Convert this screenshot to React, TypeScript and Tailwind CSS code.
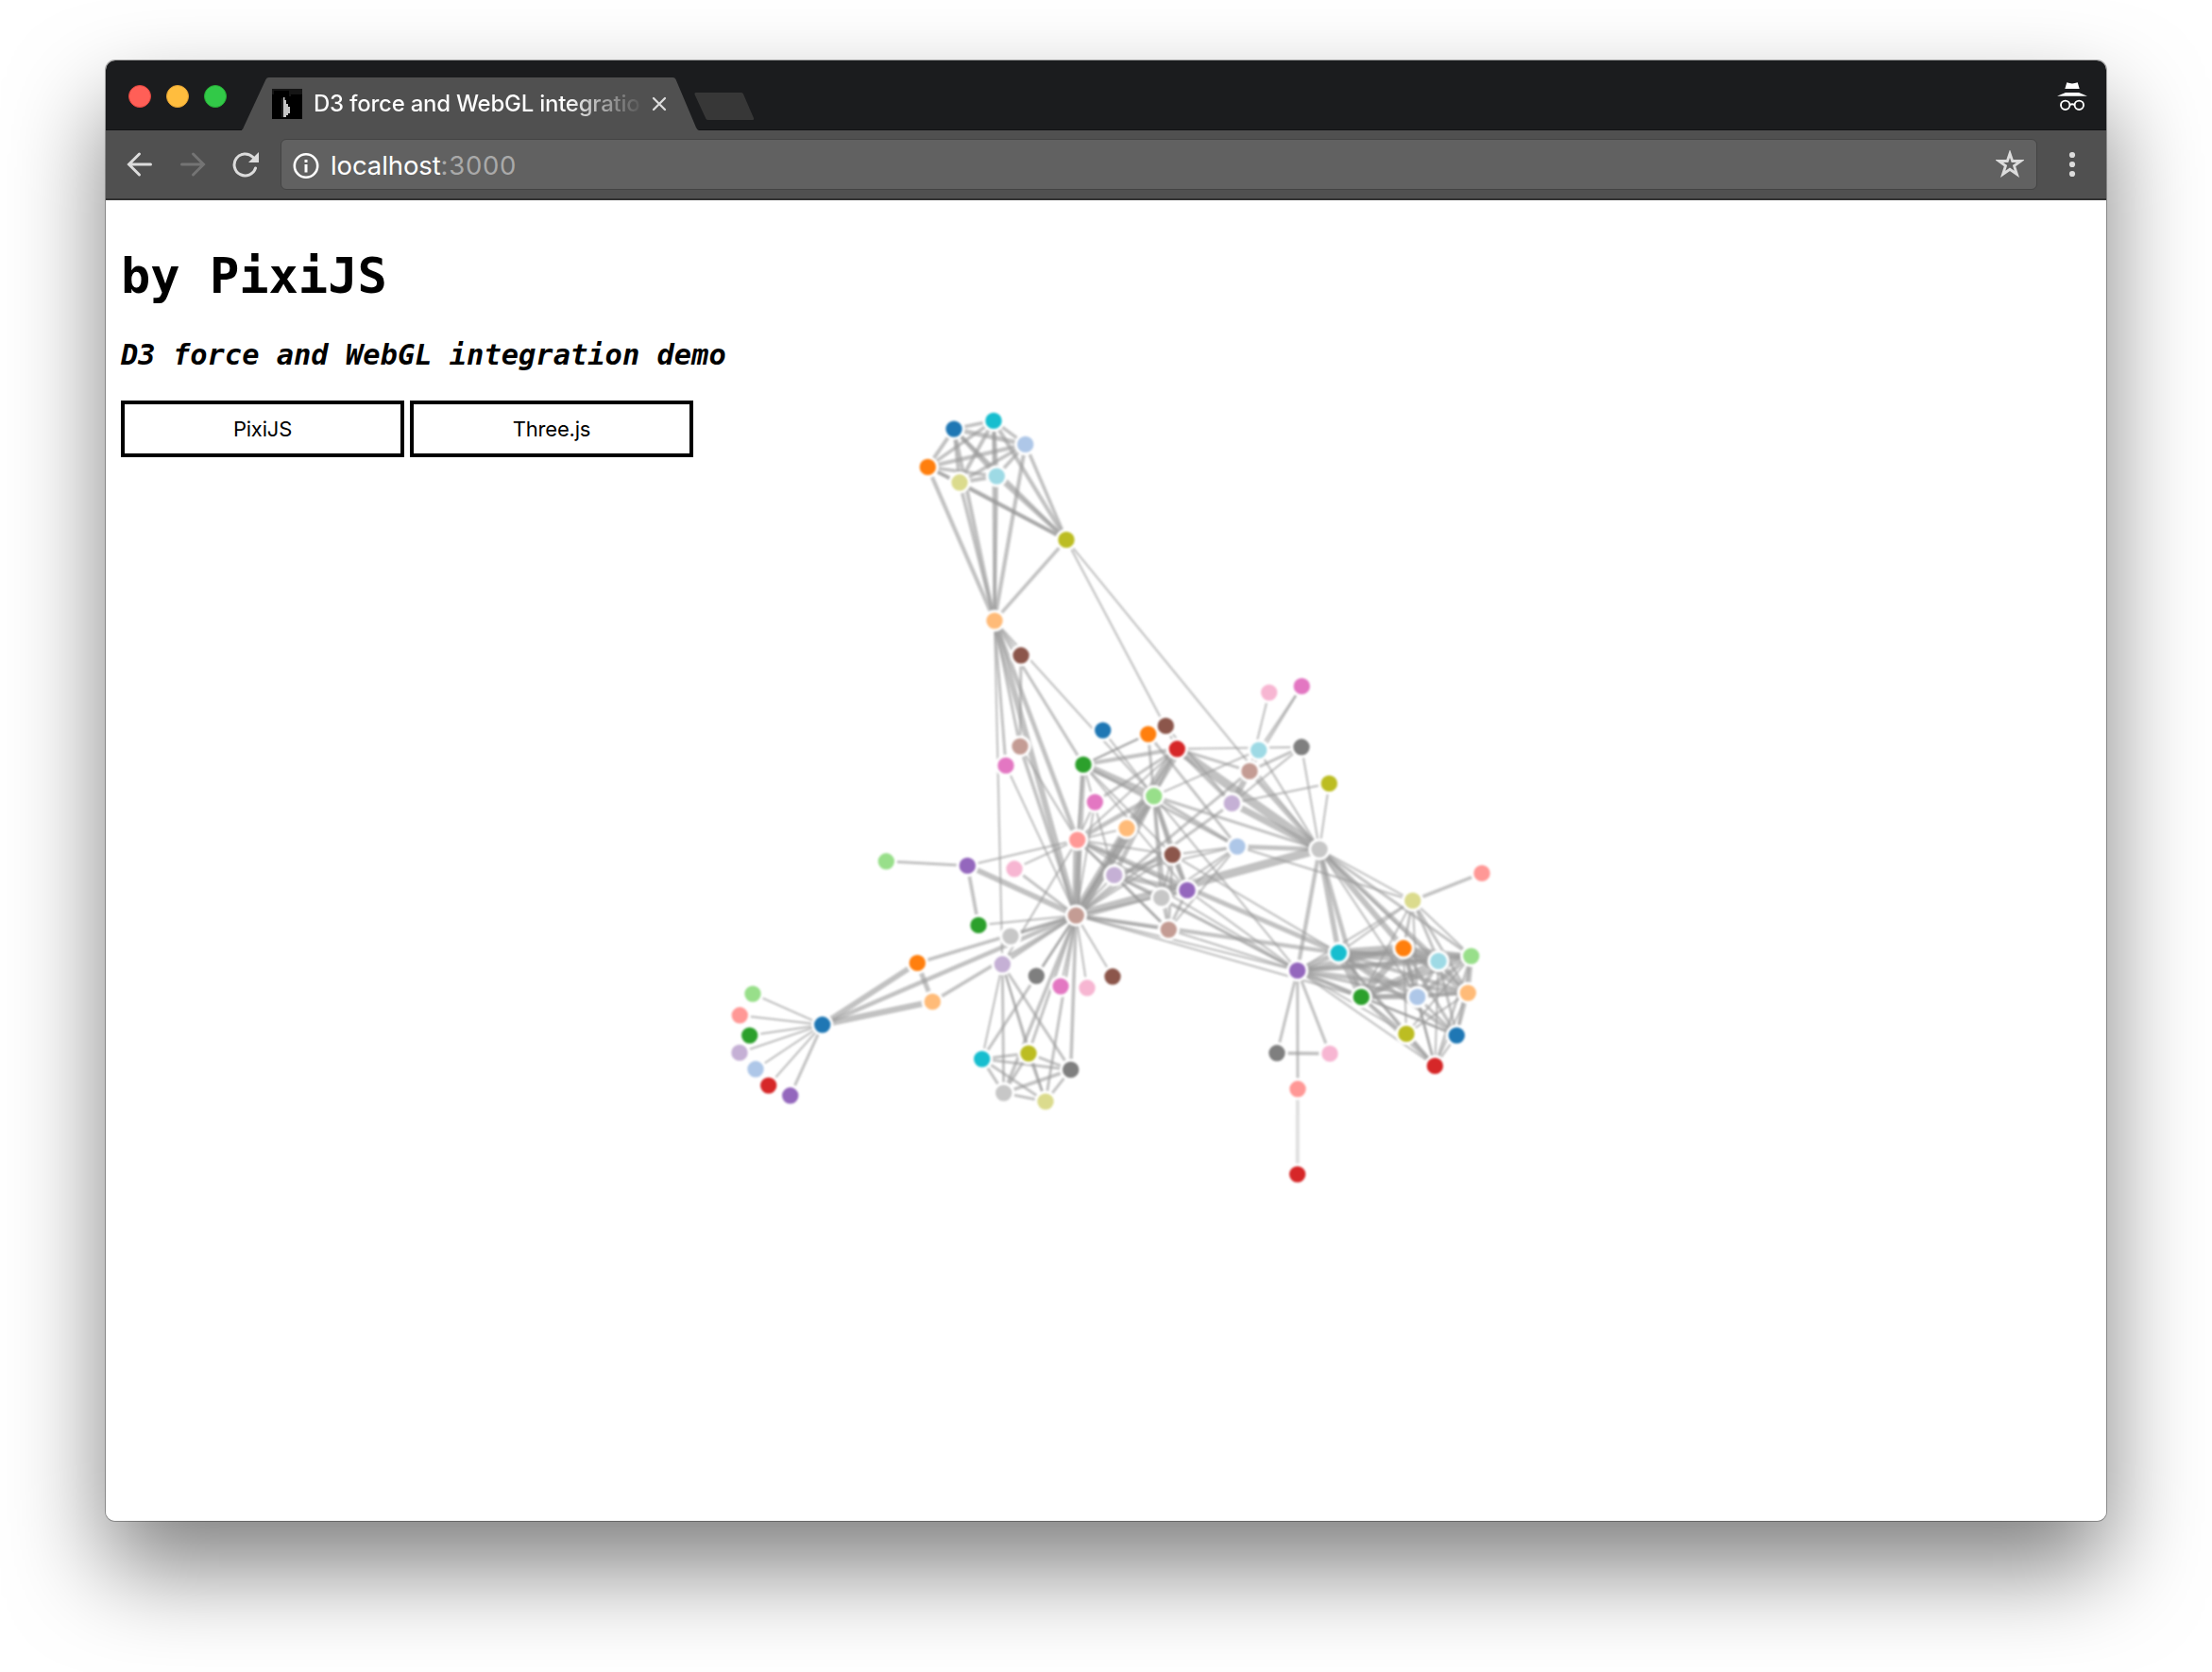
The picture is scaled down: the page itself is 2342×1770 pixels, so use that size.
const C = ['#1f77b4','#aec7e8','#ff7f0e','#ffbb78','#2ca02c','#98df8a','#d62728','#ff9896','#9467bd','#c5b0d5','#8c564b','#c49c94','#e377c2','#f7b6d2','#7f7f7f','#c7c7c7','#bcbd22','#dbdb8d','#17becf','#9edae5'];

// Node centres in window-content pixels, indexed by character id.
const NODES: [number, number][] = [
  [870.7,1084.7],[800,1131.7],[971.3,1019.3],[987.3,1060.3],[793.7,1096],[797,1052],[813.7,1149],[783.3,1074.7],[836.7,1159.7],[783,1114.3],
  [1178,1033.7],[1139.3,969],[1065,810.3],[1151,1045.7],[1097.3,1033],[1070,991],[1129,571.3],[1016,510.7],[1052,445.3],[1055.3,504],
  [1010,454],[1085.7,470.3],[982.3,494.3],[1053,657],[1147,809.3],[1221.7,842.7],[1246.3,792.7],[1140.7,889],[1024.3,916.3],[1061.3,1020.7],
  [1081,693.7],[1080,790],[1123,1044],[1074,919.7],[1133.7,1132.3],[1062.7,1157],[1089,1115],[1107,1166],[1039.7,1121],[1332.7,794],
  [1167.7,773],[1310,896],[1215.7,777],[1193,876.7],[1036,979.3],[938.3,911.7],[1373.7,1243],[1374,1152.7],[1373.7,1027.3],[1304.3,850.3],
  [1234.3,768.3],[1323,816.3],[1378.3,726.3],[1343.7,733],[1378,790.7],[1397,899],[1407.3,829.3],[1495.7,953.3],[1417.3,1008.7],[1523,1017.3],
  [1542.3,1096],[1500.7,1055.3],[1486,1003.7],[1554.3,1051],[1441.3,1055.3],[1557.7,1012],[1519.3,1128.3],[1569,924.3],[1257,942.3],[1179.7,926.3],
  [1241.3,904.7],[1237.3,984],[1159.3,849],[1408,1115.3],[1352,1114.7],[1229.7,950.3],[1489,1094.3],
];

// "source: target-value ..." for every co-occurrence.
const LINKS = `1:0-1|2:0-8|3:0-10 2-6|4:0-1|5:0-1|6:0-1|7:0-1|8:0-2|9:0-1|11:10-1 3-3 2-3 0-5|12:11-1|13:11-1|14:11-1|15:11-1
17:16-4|18:16-4 17-4|19:16-4 17-4 18-4|20:16-3 17-3 18-3 19-4|21:16-3 17-3 18-3 19-3 20-5|22:16-3 17-3 18-3 19-3 20-4 21-4
23:16-3 17-3 18-3 19-3 20-4 21-4 22-4 12-2 11-9|24:23-2 11-7|25:24-13 23-1 11-12|26:24-4 11-31 16-1 25-1|27:11-17 23-5 25-5 24-1 26-1
28:11-8 27-1|29:23-1 27-1 11-2|30:23-1|31:30-2 11-3 23-2 27-1|32:11-1|33:11-2 27-1|34:11-3 29-2|35:11-3 34-3 29-2
36:34-2 35-2 11-2 29-1|37:34-2 35-2 36-2 11-2 29-1|38:34-2 35-2 36-2 37-2 11-2 29-1|39:25-1|40:25-1|41:24-2 25-3|42:41-2 25-2 24-1
43:11-3 26-1 27-1|44:28-3 11-1|45:28-2|47:46-1|48:47-2 27-1 25-1 11-1|49:26-3 11-2|50:49-1 24-1|51:49-9 26-2 11-2|52:51-1 39-1
53:51-1|54:51-2 49-1 26-1|55:51-6 49-12 39-1 54-1 26-21 16-1 25-2 41-5 48-4 11-19|56:49-1 55-1|57:55-1 41-1 48-1
58:55-7 48-7 27-6 57-1 11-4|59:58-15 55-5 48-6 57-2|60:48-1 58-4 59-2|61:48-2 58-6 60-2 59-5 57-1 55-1
62:55-9 58-17 59-13 57-2 48-7 61-6 60-3|63:59-5 48-5 62-6 57-2 58-4 61-3 60-2 55-1|64:55-5 62-12 48-5 63-4 58-10 61-6 60-2 59-9 57-1 11-1
65:63-5 64-7 58-5 62-5 61-5 60-2 59-5 57-1 55-2 48-3|66:64-3 58-3 59-1 62-2 65-2 48-1 63-1 61-1 60-1|67:57-3
68:25-5 11-1 24-1 27-1 48-1 41-1|69:25-6 68-6 11-1 24-1 27-2 48-1 41-1|70:25-4 69-4 68-4 11-1 24-1 27-1 41-1 58-1
71:27-1 69-2 68-2 70-2 11-1 48-1 41-1 25-1|72:26-2 27-1 11-1|73:48-2|74:48-2 73-3|75:69-3 68-3 25-3 48-1 41-1 70-1 71-1
76:64-1 65-1 66-1 63-1 62-1 48-1 58-1`
  .split(/[|\n]/)
  .flatMap((row) => {
    const [s, rest] = row.trim().split(':');
    return rest.split(' ').map((p) => {
      const [t, v] = p.split('-');
      return { s: +s, t: +t, v: +v };
    });
  });

function Graph() {
  return (
    <svg className="absolute left-0 top-0 h-[1398px] w-[2118px] blur-[0.8px]" viewBox="112 211.9 2118 1398">
      <g stroke="#999" strokeOpacity={0.6}>
        {LINKS.map(({ s, t, v }) => {
          const faint = s === 47 && t === 46;
          return (
            <line
              key={`${s}-${t}`}
              x1={NODES[s][0]}
              y1={NODES[s][1]}
              x2={NODES[t][0]}
              y2={NODES[t][1]}
              strokeWidth={faint ? 4 : 2 * Math.sqrt(v) + 0.2}
              strokeOpacity={faint ? 0.3 : 0.6}
            />
          );
        })}
      </g>
      {NODES.map(([x, y], i) => (
        <circle key={i} cx={x} cy={y} r={10.2} fill={C[i % 20]} stroke="#fff" strokeWidth={3} />
      ))}
    </svg>
  );
}

function TabStrip() {
  return (
    <div className="relative flex h-[74px] border-b border-[#121314] bg-[#1b1c1e]">
      <div className="flex h-[74px] w-[144px] items-center gap-4 pl-6 pt-[2px]">
        <span className="size-6 rounded-full border border-[#e2463f] bg-[#ff5f57]" />
        <span className="size-6 rounded-full border border-[#e1a032] bg-[#ffbd3e]" />
        <span className="size-6 rounded-full border border-[#27aa35] bg-[#32c948]" />
      </div>
      <div className="relative flex h-[74px] w-[484px] pt-[18px]">
        <svg className="absolute left-0 top-0 h-[74px] w-[484px]" viewBox="0 0 484 74">
          <path d="M0 74V73.500C1 73 1.500 72 2 70.500L25.500 20Q26.500 18 28.500 18H456.500Q458.500 18 459.500 20L481 71Q482 73.500 484 74Z" fill="#505050" />
        </svg>
        <svg className="relative ml-8 mt-3 size-8" viewBox="0 0 32 32">
          <path d="M0 0H32V32H0Z" fill="#000" />
          <path d="M0 0H32V6H20V8H18V2H2V6H0Z" fill="#151515" />
          <path d="M10 10H12V30H10Z" fill="#1c1c1c" />
          <path d="M12 9H13.500V12H15V16H17V19H19V26H17V28H15V30H12Z" fill="#c4c4c4" />
        </svg>
        <div className="relative ml-[12px] mt-2 h-10 w-[350px] whitespace-nowrap bg-[linear-gradient(to_right,#fff_76%,#505050_100%)] bg-clip-text font-[Inter] text-[24px] font-medium leading-10 tracking-[-0.25px] text-transparent">
          D3 force and WebGL integratio
        </div>
        <svg className="relative ml-[8px] mt-5 size-4" viewBox="0 0 16 16">
          <path d="M2 2L14 14M14 2L2 14" stroke="#dcdcdc" strokeWidth="2.300" strokeLinecap="round" />
        </svg>
      </div>
      <svg className="-ml-1.5 mt-[34px] h-[30px] w-[66px]" viewBox="0 0 66 30">
        <path d="M3 0H51Q52.500 0 53 1.500L64 27Q64.500 29 63 29H16Q14 29 13.300 27.500L1.500 2Q1 0 3 0Z" fill="#373737" />
      </svg>
      <svg className="ml-auto mr-5 mt-[23px] h-[32px] w-8" viewBox="0 0 32 32">
        <path d="M10.300 0.300Q16 2.500 21.700 0.300L23.700 7H8.300ZM9 11H23L32 14.700H0Z" fill="#fff" />
        <g fill="none" stroke="#fff" strokeWidth="1.900">
          <circle cx="8.700" cy="24.300" r="4.700" />
          <circle cx="23.300" cy="24.300" r="4.700" />
          <path d="M13.400 24Q16 22.600 18.600 24" />
        </g>
      </svg>
    </div>
  );
}

function Toolbar() {
  return (
    <div className="flex h-[74px] items-center border-b-2 border-[#323232] bg-[#505050]">
      <svg className="ml-[22px] size-7" viewBox="0 0 28 28">
        <path d="M25.500 14H3M13.500 3L2.500 14L13.500 25" fill="none" stroke="#dcdcdc" strokeWidth="3" strokeLinecap="round" />
      </svg>
      <svg className="ml-7 size-7" viewBox="0 0 28 28">
        <path d="M2.500 14H25M14.500 3L25.500 14L14.500 25" fill="none" stroke="#747474" strokeWidth="3" strokeLinecap="round" />
      </svg>
      <svg className="ml-[28px] size-7" viewBox="0 0 28 28">
        <path d="M24.500 18A11.500 11.500 0 1 1 21.700 6.300" fill="none" stroke="#dcdcdc" strokeWidth="3" strokeLinecap="round" />
        <path d="M28 1V12H17Z" fill="#dcdcdc" />
      </svg>
      <div className="ml-[23px] flex h-[54px] w-[1860px] items-center rounded-md border border-[#434343] bg-[#616161] font-[Inter] text-[27.5px] leading-none text-white">
        <svg className="ml-[12px] mt-1 size-7" viewBox="0 0 28 28">
          <circle cx="14" cy="13.500" r="12.200" fill="none" stroke="#fff" strokeWidth="2.600" />
          <path d="M12.500 7H15.500V10H12.500ZM12.500 12H15.500V20.500H12.500Z" fill="#fff" />
        </svg>
        <span className="ml-[12px] mt-1 tracking-[-0.1px]">localhost<span className="tracking-[0.7px] text-[#a9a9a9]">:3000</span></span>
        <svg className="ml-auto mr-[13px] size-[30px]" viewBox="0 0 30 30">
          <path d="M15 3.500L17.700 11.500H26.500L19.500 16.500L22.400 25.500L15 20.300L7.600 25.500L10.500 16.500L3.500 11.500H12.300Z" fill="none" stroke="#dcdcdc" strokeWidth="2.800" />
        </svg>
      </div>
      <svg className="ml-[33px] h-7 w-2" viewBox="0 0 8 28">
        <g fill="#dcdcdc">
          <circle cx="4" cy="4" r="3.100" />
          <circle cx="4" cy="14" r="3.100" />
          <circle cx="4" cy="24" r="3.100" />
        </g>
      </svg>
    </div>
  );
}

export default function App() {
  return (
    <div className="h-[1770px] w-[2342px] overflow-hidden bg-white px-[112px] pt-[64px]">
      <div className="flex h-[1546px] w-[2118px] flex-col rounded-[10px] shadow-[0_0_0_1px_rgba(0,0,0,0.3),0_50px_100px_rgba(0,0,0,0.5)]">
        <div className="flex h-full flex-col overflow-hidden rounded-[10px] bg-white">
          <TabStrip />
          <Toolbar />
          <main className="relative flex grow flex-col items-start pl-4 font-['DejaVu_Sans_Mono'] text-black">
            <Graph />
            <h1 className="relative mt-[49px] text-[52px] font-bold leading-[62px]">by PixiJS</h1>
            <h2 className="relative mt-[35px] text-[30.42px] font-bold italic leading-[36px]">D3 force and WebGL integration demo</h2>
            <div className="relative mt-[30px] flex gap-1.5 font-[Inter] text-[22px] tracking-[-0.2px]">
              <button className="h-[60px] w-[300px] border-4 border-black bg-white">PixiJS</button>
              <button className="h-[60px] w-[300px] border-4 border-black bg-white">Three.js</button>
            </div>
          </main>
        </div>
      </div>
    </div>
  );
}
